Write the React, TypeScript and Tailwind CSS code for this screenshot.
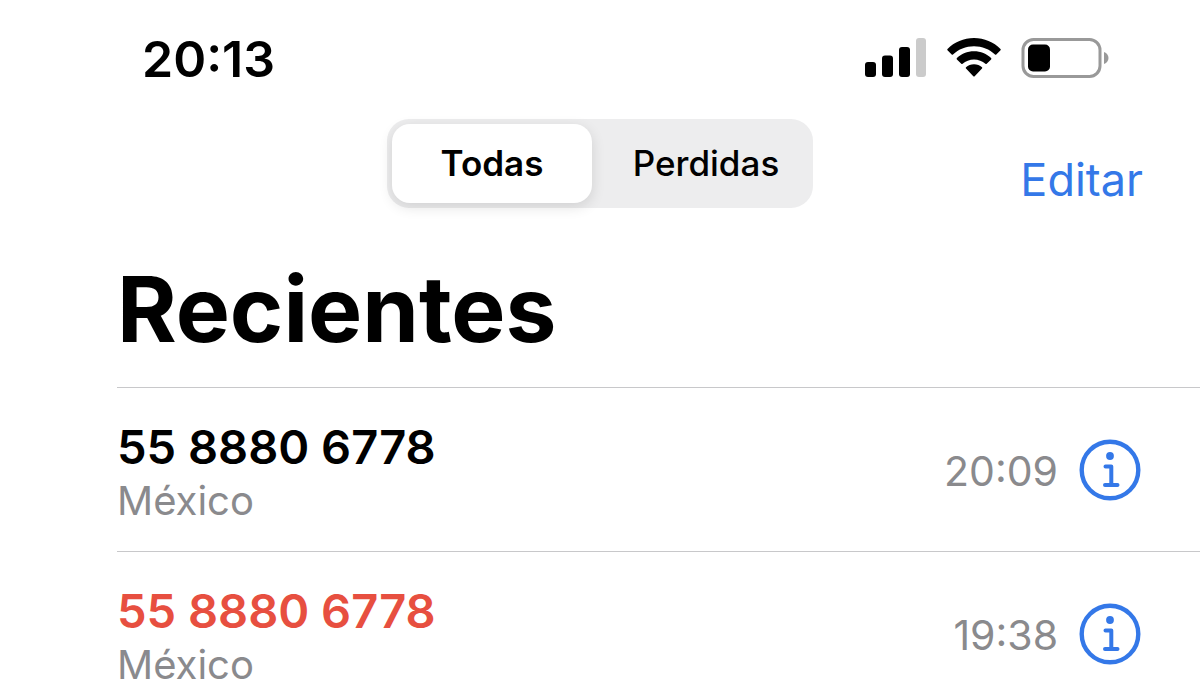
import { useState } from "react";
import clsx from "clsx";

const calls = [
  { id: 1, number: "55 8880 6778", place: "México", time: "20:09", missed: false },
  { id: 2, number: "55 8880 6778", place: "México", time: "19:38", missed: true },
];

const SignalIcon = () => (
  <svg width="62" height="40" viewBox="0 0 62 40" aria-hidden="true">
    <rect x="0" y="24" width="11" height="15" rx="3" />
    <rect x="17" y="17.500" width="11" height="21.500" rx="3" />
    <rect x="34" y="9" width="11" height="30" rx="3" />
    <rect x="51" y="0" width="10" height="39" rx="3" fill="#cbcbcb" />
  </svg>
);

const WifiIcon = () => (
  <svg width="54" height="40" viewBox="0 0 54 40" aria-hidden="true">
    <path d="M27 0C16.700 0 7.300 4.100 0.500 10.900C0.100 11.300 0.100 11.800 0.500 12.200L4.700 16.500C5.100 16.900 5.600 16.900 6 16.500C11.500 11.400 18.900 8.300 27 8.300S42.500 11.400 48 16.500C48.400 16.900 48.900 16.900 49.300 16.500L53.500 12.200C53.900 11.800 53.900 11.300 53.500 10.900C46.700 4.100 37.300 0 27 0Z" />
    <path d="M27 13.200C20.300 13.200 14.300 15.800 9.900 20.100C9.500 20.500 9.500 21 9.900 21.400L14.300 25.800C14.700 26.200 15.200 26.200 15.600 25.800C18.600 23 22.600 21.400 27 21.400S35.400 23 38.400 25.800C38.800 26.200 39.300 26.200 39.700 25.800L44.100 21.400C44.500 21 44.500 20.500 44.100 20.100C39.700 15.800 33.700 13.200 27 13.200Z" />
    <path d="M27 26.200C23.800 26.200 21.100 27.400 19 29.200C18.600 29.600 18.600 30.100 19 30.500L26.300 38.200C26.700 38.600 27.300 38.600 27.700 38.200L35 30.500C35.400 30.100 35.400 29.600 35 29.200C32.900 27.400 30.200 26.200 27 26.200Z" />
  </svg>
);

const BatteryIcon = () => (
  <svg width="88" height="40" viewBox="0 0 88 40" aria-hidden="true">
    <rect x="2" y="1.500" width="77" height="37" rx="10.500" fill="none" stroke="#999" strokeWidth="3" />
    <rect x="7" y="6.500" width="22" height="27" rx="5" />
    <path d="M83 14C86 15 87.500 17.500 87.500 20S86 25 83 26Z" fill="#999" />
  </svg>
);

const InfoIcon = () => (
  <svg width="62" height="62" viewBox="0 0 62 62" fill="none" stroke="currentColor" aria-hidden="true">
    <circle cx="31" cy="31" r="28.300" strokeWidth="4.400" />
    <circle cx="31" cy="17" r="3.900" fill="currentColor" stroke="none" />
    <path d="M26.500 27.500H32.300V45.500M26 46H38.500" strokeWidth="4" strokeLinecap="round" strokeLinejoin="round" />
  </svg>
);

const App = () => {
  const [tab, setTab] = useState("Todas");
  const visible = tab === "Todas" ? calls : calls.filter((call) => call.missed);

  return (
    <div className="h-screen overflow-hidden bg-white font-['Inter',sans-serif] text-black">
      <header className="flex items-center justify-between pt-[29px] pr-[91px] pl-[142px]">
        <time className="text-[50px] leading-[60px] font-semibold">20:13</time>
        <div className="flex items-center gap-5 pb-[3px]">
          <SignalIcon />
          <WifiIcon />
          <BatteryIcon />
        </div>
      </header>

      <nav className="mt-[30px] grid grid-cols-[1fr_auto_1fr]">
        <div className="col-start-2 flex rounded-[22px] bg-[#ededee] p-[5px]">
          {["Todas", "Perdidas"].map((name) => (
            <button
              key={name}
              type="button"
              aria-pressed={tab === name}
              onClick={() => setTab(name)}
              className={clsx(
                "h-[79px] text-[35px]",
                name === "Todas" ? "w-[200px]" : "ml-3 w-[204px]",
                tab === name ? "rounded-[18px] bg-white font-semibold shadow-[0_4px_14px_rgba(0,0,0,0.12)]" : "font-medium"
              )}
            >
              {name}
            </button>
          ))}
        </div>
        <button type="button" className="mt-[35px] mr-[57px] self-start justify-self-end text-[45px] leading-[52px] text-[#3478e8]">
          Editar
        </button>
      </nav>

      <main className="pl-[117px]">
        <h1 className="mt-[51px] mb-7 text-[91px] leading-[100px] font-bold">Recientes</h1>
        <ul>
          {visible.map((call) => (
            <li key={call.id} className="flex items-center justify-between border-t border-[#c8c8ca] pr-[59px]">
              <div className="pt-8 pb-[23px] leading-[54px]">
                <p className={clsx("text-[47px] font-semibold", call.missed && "text-[#e74f40]")}>{call.number}</p>
                <p className="text-[40px] text-[#8a8a8d]">{call.place}</p>
              </div>
              <div className="flex items-center gap-[21px]">
                <time className="pt-1 text-[41px] text-[#8a8a8d]">{call.time}</time>
                <button type="button" aria-label="Información" className="text-[#3478e8]">
                  <InfoIcon />
                </button>
              </div>
            </li>
          ))}
        </ul>
      </main>
    </div>
  );
};

export default App;
